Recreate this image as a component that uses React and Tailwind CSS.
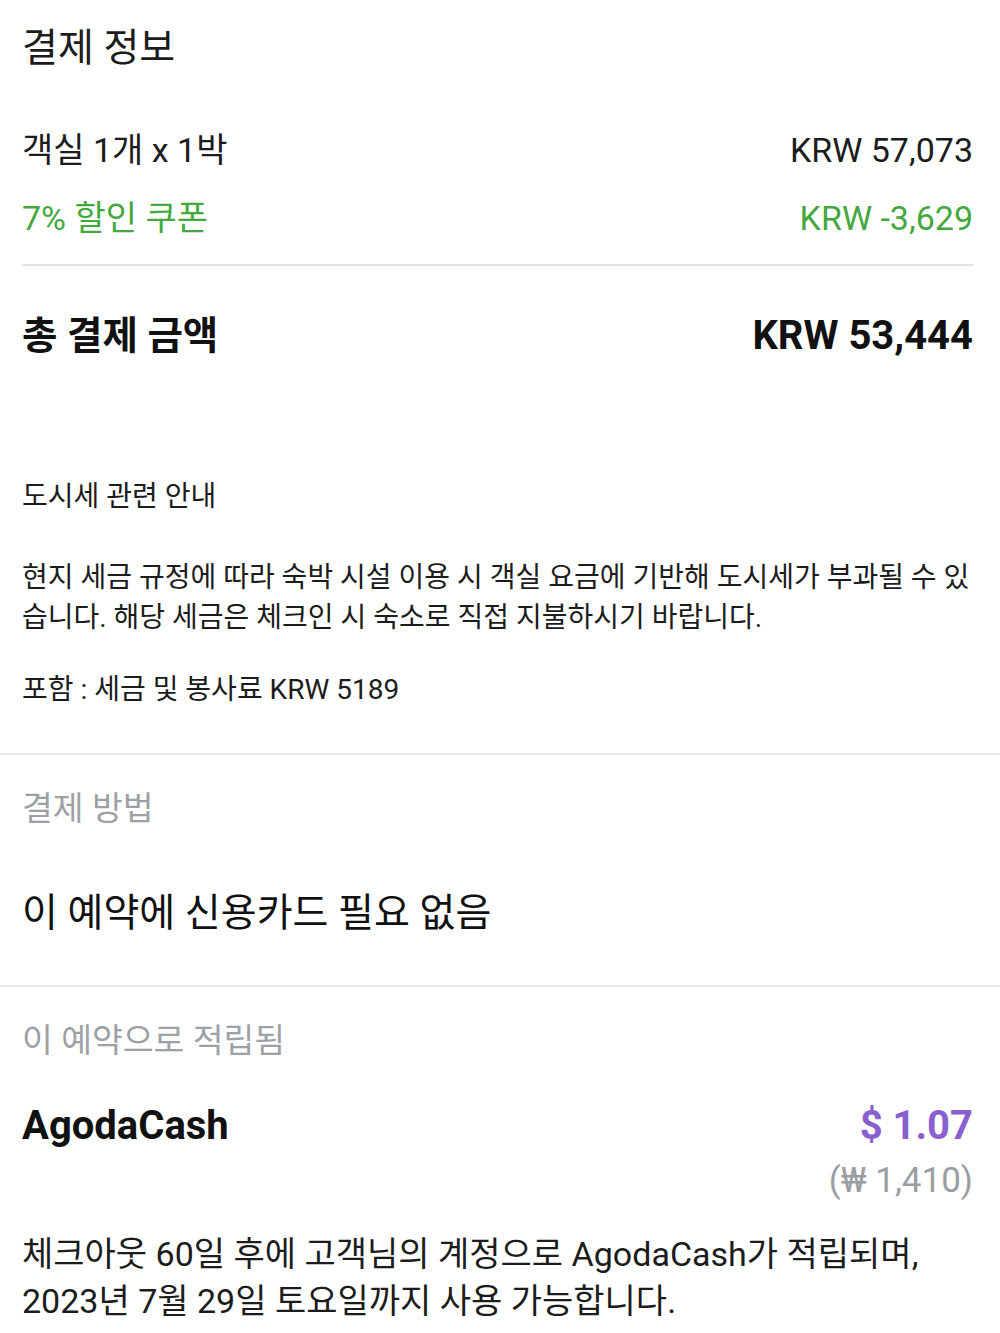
import React from "react";

const F = { fontFamily: 'Roboto, "Noto Sans CJK KR", sans-serif' };

export default function App() {
  return (
    <div className="w-[1000px] bg-white text-[#1c1c1c]" style={F}>
      {/* Section 1 */}
      <div className="pl-[22px] pr-[27px]">
        <div className="pt-[25px] text-[39px] leading-[46px]">결제 정보</div>

        <div className="mt-[59px] flex items-center justify-between leading-[40px]">
          <span className="text-[34px]">객실 1개 x 1박</span>
          <span className="text-[34px]">KRW 57,073</span>
        </div>
        <div className="mt-[28px] flex items-center justify-between leading-[40px] text-[#45a83f]">
          <span className="text-[34px]">7% 할인 쿠폰</span>
          <span className="text-[34px]">KRW -3,629</span>
        </div>
        <div className="mt-[26px] h-[2px] bg-[#e4e4e4]" />

        <div className="mt-[45px] flex items-center justify-between leading-[50px] font-bold text-[#111]">
          <span className="text-[38.5px]">총 결제 금액</span>
          <span className="text-[40px]">KRW 53,444</span>
        </div>

        <div className="mt-[116px] text-[28px] leading-[40px]">도시세 관련 안내</div>
        <div className="mt-[41px] text-[28px] leading-[40px]">
          <div className="whitespace-nowrap">현지 세금 규정에 따라 숙박 시설 이용 시 객실 요금에 기반해 도시세가 부과될 수 있</div>
          <div className="whitespace-nowrap">습니다. 해당 세금은 체크인 시 숙소로 직접 지불하시기 바랍니다.</div>
        </div>
        <div className="mt-[32px] text-[28px] leading-[40px]">포함 : 세금 및 봉사료 KRW 5189</div>
      </div>
      <div className="mt-[43px] h-[2px] bg-[#e4e6e8]" />

      {/* Section 2 */}
      <div className="pl-[22px] pr-[27px]">
        <div className="mt-[34px] text-[33.5px] leading-[40px] text-[#9da1a6]">결제 방법</div>
        <div className="mt-[59px] text-[39px] leading-[50px] text-[#111]">이 예약에 신용카드 필요 없음</div>
      </div>
      <div className="mt-[47px] h-[2px] bg-[#e4e6e8]" />

      {/* Section 3 */}
      <div className="pl-[22px] pr-[27px] pb-[10px]">
        <div className="mt-[34px] text-[33.5px] leading-[40px] text-[#9da1a6]">이 예약으로 적립됨</div>
        <div className="mt-[40px] flex items-center justify-between leading-[50px] font-bold">
          <span className="text-[40px] text-[#111]">AgodaCash</span>
          <span className="text-[40px] text-[#8a5fcf]">$ 1.07</span>
        </div>
        <div className="mt-[10px] flex justify-end text-[35px] leading-[40px] text-[#9a9ea3]">(₩ 1,410)</div>
        <div className="mt-[30px] text-[34px] leading-[47px]">
          <div className="whitespace-nowrap">체크아웃 60일 후에 고객님의 계정으로 AgodaCash가 적립되며,</div>
          <div className="whitespace-nowrap">2023년 7월 29일 토요일까지 사용 가능합니다.</div>
        </div>
      </div>
    </div>
  );
}
